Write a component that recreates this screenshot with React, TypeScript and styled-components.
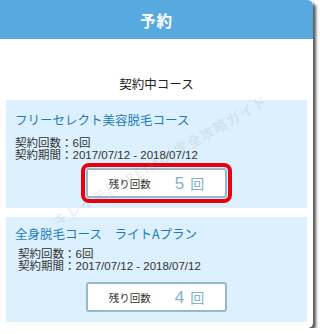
import React from 'react'
import styled, { createGlobalStyle } from 'styled-components'

const GlobalStyle = createGlobalStyle`
  html, body {
    margin: 0;
    padding: 0;
    background: #ffffff;
  }
  body {
    font-family: 'Liberation Sans', 'Noto Sans CJK JP', sans-serif;
    color: #333333;
  }
`

interface iCourse {
  id: number
  name: string
  count: number
  period: string
  remaining: number
  highlight?: boolean
  pt: number
  gap: number
  btnGap: number
  indent: number
}

const courses: iCourse[] = [
  {
    id: 1,
    name: 'フリーセレクト美容脱毛コース',
    count: 6,
    period: '2017/07/12 - 2018/07/12',
    remaining: 5,
    highlight: true,
    pt: 11,
    gap: 8,
    btnGap: 7,
    indent: 0
  },
  {
    id: 2,
    name: '全身脱毛コース　ライトAプラン',
    count: 6,
    period: '2017/07/12 - 2018/07/12',
    remaining: 4,
    pt: 8,
    gap: 5,
    btnGap: 10,
    indent: 3
  }
]

const App: React.FC = () => {
  return (
    <>
      <GlobalStyle />
      <Frame>
        <Header>予約</Header>
        <Body>
          <SectionTitle>契約中コース</SectionTitle>
          <CardList>
            {courses.map((c) => (
              <Card key={c.id} $pt={c.pt}>
                <CourseName>{c.name}</CourseName>
                <Details $gap={c.gap} $indent={c.indent}>
                  <DetailLine>契約回数：{c.count}回</DetailLine>
                  <DetailLine>契約期間：{c.period}</DetailLine>
                </Details>
                <ButtonRow $gap={c.btnGap}>
                  <RemainButton $highlight={c.highlight}>
                    <RemainLabel>残り回数</RemainLabel>
                    <RemainCount>
                      <Digit>{c.remaining}</Digit>
                      <Unit>回</Unit>
                    </RemainCount>
                  </RemainButton>
                </ButtonRow>
              </Card>
            ))}
          </CardList>
        </Body>
        <Watermark>キレイモ(KIREIMO)完全攻略ガイド</Watermark>
      </Frame>
    </>
  )
}

export default App

const Frame = styled.div`
  position: relative;
  width: 313px;
  height: 328px;
  background: #ffffff;
  border-radius: 0 5px 5px 0;
  box-shadow: 3px 3px 3px rgba(0, 0, 0, 0.65);
  overflow: hidden;
`
const Header = styled.div`
  height: 39px;
  background: #56aae0;
  border-top-right-radius: 5px;
  display: flex;
  align-items: center;
  justify-content: center;
  color: #ffffff;
  font-family: 'Noto Sans CJK JP', sans-serif;
  font-weight: 700;
  font-size: 15.5px;
  letter-spacing: 1px;
`
const Body = styled.div`
  padding: 35px 6px 0;
`
const SectionTitle = styled.div`
  height: 20px;
  line-height: 20px;
  text-align: center;
  font-family: 'Noto Sans CJK JP', sans-serif;
  font-size: 12.5px;
  color: #222222;
  margin-bottom: 6px;
`
const CardList = styled.div`
  display: flex;
  flex-direction: column;
  gap: 9px;
`
const Card = styled.div<{ $pt: number }>`
  background: #dcf0fd;
  padding: ${({ $pt }) => $pt}px 9px 10px;
`
const CourseName = styled.div`
  height: 18px;
  line-height: 18px;
  font-family: 'Noto Sans CJK JP', sans-serif;
  font-size: 12.5px;
  color: #1d7cb8;
`
const Details = styled.div<{ $gap: number; $indent: number }>`
  margin-top: ${({ $gap }) => $gap}px;
  padding-left: ${({ $indent }) => $indent}px;
  display: flex;
  flex-direction: column;
`
const DetailLine = styled.div`
  height: 12px;
  line-height: 12px;
  font-family: 'Liberation Sans', 'Noto Sans CJK JP', sans-serif;
  font-size: 11.5px;
  color: #333333;
  white-space: nowrap;
`
const ButtonRow = styled.div<{ $gap: number }>`
  margin-top: ${({ $gap }) => $gap}px;
  display: flex;
  justify-content: center;
`
const RemainButton = styled.div<{ $highlight?: boolean }>`
  box-sizing: border-box;
  width: 141px;
  height: 30px;
  background: #ffffff;
  border: 2px solid #97b9cd;
  border-radius: 3px;
  display: flex;
  align-items: center;
  justify-content: center;
  gap: 24px;
  outline: ${({ $highlight }) => ($highlight ? '4px solid #e8000f' : 'none')};
  outline-offset: 1px;
`
const RemainLabel = styled.span`
  font-family: 'Noto Sans CJK JP', sans-serif;
  font-size: 10.5px;
  color: #333333;
`
const RemainCount = styled.span`
  display: flex;
  align-items: baseline;
  gap: 6px;
  color: #86b0ca;
`
const Digit = styled.span`
  font-family: 'Liberation Sans', sans-serif;
  font-size: 17px;
`
const Unit = styled.span`
  font-family: 'Noto Sans CJK JP', sans-serif;
  font-size: 14px;
`
const Watermark = styled.div`
  position: absolute;
  left: 30px;
  top: 150px;
  width: 260px;
  text-align: center;
  transform: rotate(-30deg);
  font-family: 'Noto Sans CJK JP', sans-serif;
  font-weight: 700;
  font-size: 14px;
  letter-spacing: 1px;
  color: rgba(130, 130, 130, 0.13);
  white-space: nowrap;
  pointer-events: none;
`
